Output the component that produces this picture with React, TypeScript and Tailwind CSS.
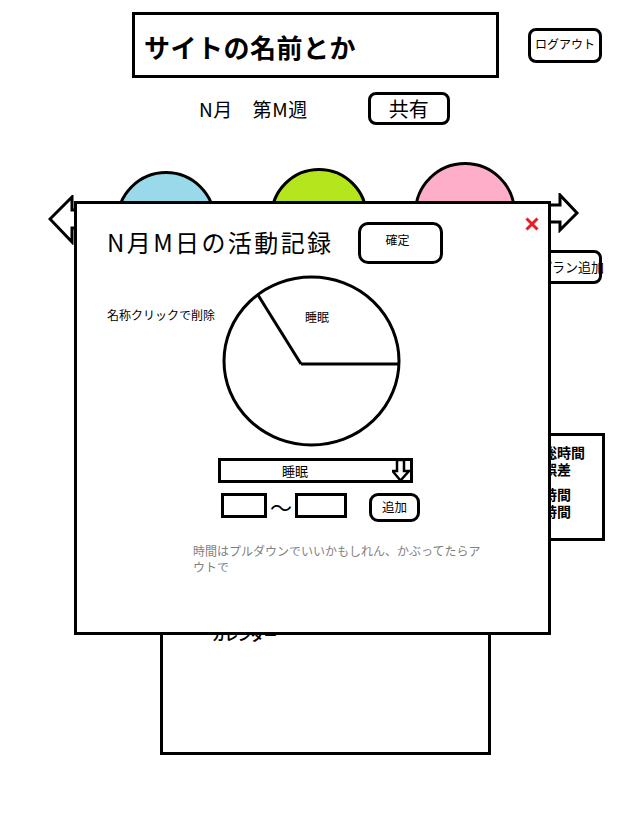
const jp = { fontFamily: '"Noto Sans CJK JP", "Noto Sans", sans-serif' };

const LeftArrow = () => (
  <svg width="30" height="50" viewBox="0 0 30 50" className="mt-[33px] shrink-0">
    <polygon points="30,15 24,15 24,2 2,24 24,47 24,33 30,33" fill="white" stroke="black" strokeWidth="3" strokeLinejoin="miter" />
  </svg>
);

const RightArrow = () => (
  <svg width="50" height="40" viewBox="0 0 50 40" className="ml-[14px] mt-[31px] shrink-0">
    <polygon points="0,12 30,12 30,2 47,20 30,37 30,29 0,29" fill="white" stroke="black" strokeWidth="3" />
  </svg>
);

const PieChart = () => (
  <svg width="180" height="172" viewBox="0 0 180 172" className="shrink-0">
    <ellipse cx="89.5" cy="86" rx="87.5" ry="84" fill="white" stroke="black" strokeWidth="3" />
    <line x1="79" y1="89" x2="178" y2="89" stroke="black" strokeWidth="3" />
    <line x1="79" y1="89" x2="36" y2="20" stroke="black" strokeWidth="3" />
    <text x="83" y="47" fontSize="12" fill="black" style={jp}>睡眠</text>
  </svg>
);

const DownIcon = () => (
  <svg width="18" height="23" viewBox="0 0 18 23" className="ml-auto shrink-0">
    <polygon points="5,1 12,1 12,12 17,12 8.5,21.5 0.5,12 5,12" fill="white" stroke="black" strokeWidth="2.5" />
  </svg>
);

const ActivityModal = () => (
  <div className="absolute left-[74px] top-[201px] w-[477px] h-[434px] border-[3px] border-black bg-white">
    <div className="flex items-start pt-[13px]">
      <div className="w-[281px] pl-[30px] mt-[11px] text-[24px] leading-[28px] tracking-[2.4px] whitespace-nowrap text-black">
        N月M日の活動記録
      </div>
      <button className="mt-[5px] w-[85px] h-[42px] border-[3px] border-black rounded-[10px] flex items-center justify-center pb-[6px] pr-[6px] text-[12px] bg-white">
        確定
      </button>
      <svg width="14" height="14" viewBox="0 0 14 14" className="ml-auto mr-[9px]">
        <line x1="1.5" y1="1.5" x2="12.5" y2="12.5" stroke="#ed1c24" strokeWidth="3" />
        <line x1="12.5" y1="1.5" x2="1.5" y2="12.5" stroke="#ed1c24" strokeWidth="3" />
      </svg>
    </div>

    <div className="flex items-start mt-[11px]">
      <div className="w-[145px] pl-[30px] pt-[32px] text-[12px] leading-[16px] whitespace-nowrap">名称クリックで削除</div>
      <PieChart />
    </div>

    <div className="ml-[141px] mt-[11px] w-[195px] h-[25px] border-[3px] border-black flex items-center pl-[61px] text-[13px] leading-none">
      <span>睡眠</span>
      <DownIcon />
    </div>

    <div className="flex items-start ml-[144px] mt-[10px]">
      <div className="w-[46px] h-[25px] border-[3px] border-black" />
      <span className="w-[28px] h-[25px] flex items-center justify-center text-[22px] leading-none">〜</span>
      <div className="w-[52px] h-[25px] border-[3px] border-black" />
      <button className="ml-[22px] w-[51px] h-[29px] border-[3px] border-black rounded-[9px] flex items-center justify-center text-[12.5px] bg-white">
        追加
      </button>
    </div>

    <p className="ml-[116px] mt-[21px] w-[292px] text-[12px] leading-[16px] text-[#7f7f7f]">
      時間はプルダウンでいいかもしれん、かぶってたらアウトで
    </p>
  </div>
);

export default function App() {
  return (
    <div className="relative w-[634px] h-[814px] overflow-hidden bg-white text-black" style={jp}>
      <div className="flex items-start pt-[12px] pl-[132px]">
        <div className="w-[367px] h-[66px] border-[3px] border-black flex items-center pl-[9px] pt-[3px]">
          <span className="text-[26px] font-bold leading-none tracking-[0.5px] whitespace-nowrap">サイトの名前とか</span>
        </div>
        <button className="ml-[29px] mt-[16px] w-[74px] h-[35px] border-[3px] border-black rounded-[8px] flex items-center justify-center pb-[4px] text-[12px] whitespace-nowrap bg-white">
          ログアウト
        </button>
      </div>

      <div className="flex items-center mt-[14px] pl-[199px]">
        <span className="text-[19px] leading-none whitespace-nowrap tracking-[0.6px]">N月　第M週</span>
        <button className="ml-[60px] w-[82px] h-[33px] border-[3px] border-black rounded-[8px] flex items-center justify-center text-[20px] leading-none bg-white">
          共有
        </button>
      </div>

      <div className="flex items-start h-[88px] mt-[37px] pl-[48px]">
        <LeftArrow />
        <div className="ml-[38px] mt-[9px] w-[100px] h-[100px] shrink-0 rounded-full border-[3px] border-black bg-[#99d9ea]" />
        <div className="ml-[54px] mt-[6px] w-[98px] h-[98px] shrink-0 rounded-full border-[3px] border-black bg-[#b5e61d]" />
        <div className="ml-[46px] w-[102px] h-[102px] shrink-0 rounded-full border-[3px] border-black bg-[#ffaec9]" />
        <RightArrow />
      </div>

      <div className="flex justify-end pr-[32px]">
        <button className="w-[74px] h-[34px] border-[3px] border-black rounded-[8px] pl-[8px] text-left text-[13px] whitespace-nowrap bg-white">
          プラン追加
        </button>
      </div>

      <div className="flex justify-end pr-[29px] mt-[149px]">
        <div className="w-[106px] h-[108px] border-[3px] border-black pl-[13px] pt-[8px] text-[14px] font-bold leading-[17px]">
          <div>活動総時間</div>
          <div>予定誤差</div>
          <div className="mt-[8px]">睡眠時間</div>
          <div>活動時間</div>
        </div>
      </div>

      <div className="ml-[160px] mt-[49px] w-[331px] h-[165px] border-[3px] border-black pl-[49px] pt-[28px]">
        <span className="text-[13px] font-bold leading-[16px]">カレンダー</span>
      </div>

      <ActivityModal />
    </div>
  );
}
